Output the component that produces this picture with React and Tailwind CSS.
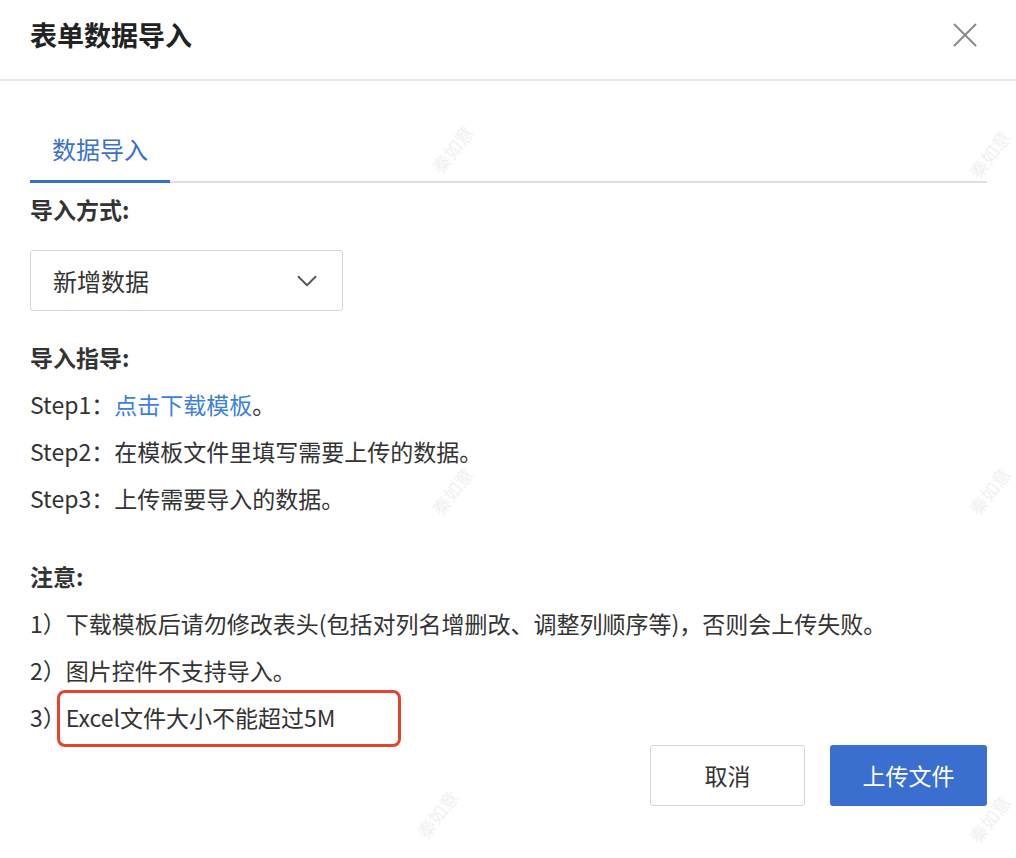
import { X, ChevronDown } from "lucide-react";

// ── 水印 ─────────────────────────────────────────────────────────────────────

function Watermark({ className }) {
  return (
    <span
      className={`pointer-events-none absolute select-none whitespace-nowrap text-[18px] leading-none text-[#f1f1f1] -rotate-[52deg] ${className}`}
    >
      秦如意
    </span>
  );
}

const FONT = { fontFamily: '"Noto Sans CJK SC", "Noto Sans", sans-serif' };

export default function App() {
  return (
    <div
      className="relative h-[858px] w-[1016px] overflow-hidden bg-white text-[#333333]"
      style={FONT}
    >
      {/* 头部 */}
      <div className="flex h-[81px] items-center justify-between border-b-2 border-[#e8e9ed] pb-[10px] pl-[30px] pr-[30px]">
        <h1 className="text-[27px] font-bold leading-none text-[#222222]">表单数据导入</h1>
        <X size={42} strokeWidth={1.15} className="text-[#8a8a8a]" />
      </div>

      <div className="px-[30px] pr-[29px] pt-[52px]">
        {/* 标签 */}
        <div className="flex border-b-2 border-[#dcdfe6]">
          <div className="-mb-[2px] w-[140px] border-b-[3px] border-[#3a6fcf] pb-[15px] pl-[22px] text-[24px] leading-[32px] text-[#3a6fcf]">
            数据导入
          </div>
        </div>

        {/* 导入方式 */}
        <div className="mt-[10px] text-[23px] font-bold leading-[32px]">导入方式:</div>
        <div className="mt-[25px] flex h-[61px] w-[313px] items-center justify-between rounded-[3px] border border-[#d3d6dc] pl-[22px] pr-[18px]">
          <span className="text-[24px] text-[#333333]">新增数据</span>
          <ChevronDown size={34} strokeWidth={1.3} className="text-[#555555]" />
        </div>

        {/* 导入指导 */}
        <div className="mt-[30px] text-[23px] font-bold leading-[32px]">导入指导:</div>
        <div className="mt-[8px] text-[23px] leading-[47px]">
          <p>
            Step1：<span className="text-[#3d7fe0]">点击下载模板</span>。
          </p>
          <p>Step2：在模板文件里填写需要上传的数据。</p>
          <p>Step3：上传需要导入的数据。</p>
        </div>

        {/* 注意 */}
        <div className="mt-[38px] text-[23px] font-bold leading-[32px]">注意:</div>
        <div className="mt-[8px] text-[23px] leading-[47px]">
          <p>1）下载模板后请勿修改表头(包括对列名增删改、调整列顺序等)，否则会上传失败。</p>
          <p>2）图片控件不支持导入。</p>
          <p className="relative">
            3）Excel文件大小不能超过5M
            <span className="absolute left-[27px] top-[-4px] h-[57px] w-[344px] rounded-[8px] border-[3px] border-[#e5432c]" />
          </p>
        </div>

        {/* 按钮 */}
        <div className="mt-[4px] flex justify-end gap-[25px]">
          <button
            type="button"
            className="h-[61px] w-[155px] rounded-[3px] border border-[#d3d6dc] bg-white text-[23px] text-[#333333]"
          >
            取消
          </button>
          <button
            type="button"
            className="h-[61px] w-[157px] rounded-[3px] bg-[#3a6fcf] text-[23px] text-white"
          >
            上传文件
          </button>
        </div>
      </div>

      <Watermark className="left-[425px] top-[140px]" />
      <Watermark className="left-[962px] top-[145px]" />
      <Watermark className="left-[425px] top-[482px]" />
      <Watermark className="left-[962px] top-[482px]" />
      <Watermark className="left-[410px] top-[805px]" />
      <Watermark className="left-[962px] top-[810px]" />
    </div>
  );
}
